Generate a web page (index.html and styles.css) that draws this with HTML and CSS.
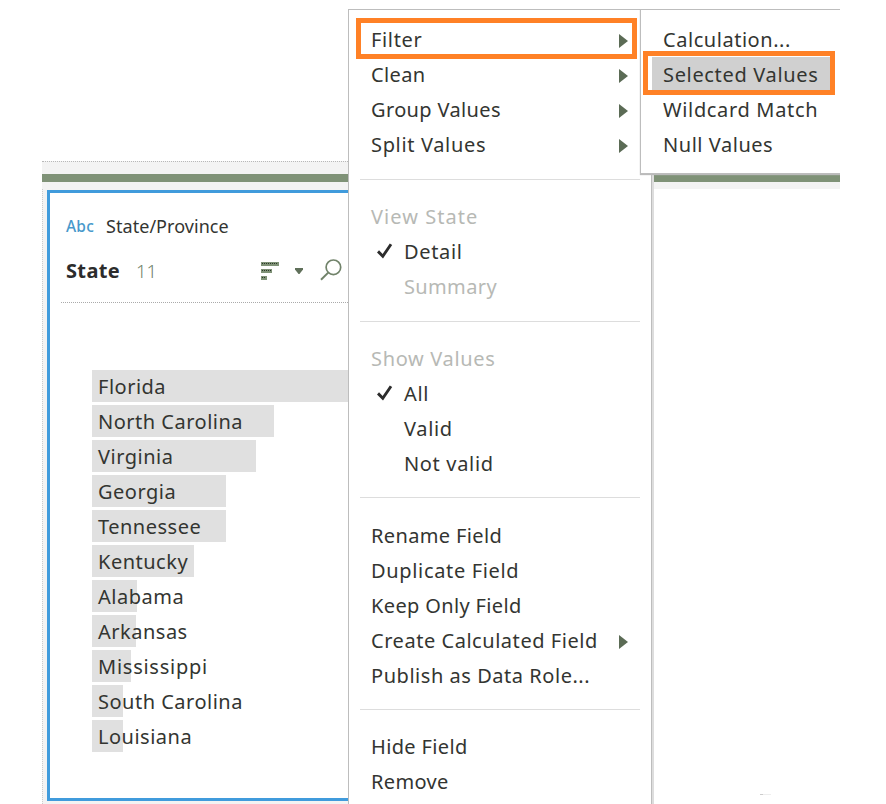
FILE: index.html
```html
<!DOCTYPE html>
<html lang="en">
<head>
<meta charset="utf-8">
<title>State field menu</title>
<link rel="stylesheet" href="styles.css">
</head>
<body>
<div class="app">
  <div class="toolbar-gap"></div>
  <div class="strip"></div>
  <div class="step-bar"></div>
  <div class="strip strip-low"></div>
  <div class="work">
    <section class="card">
      <div class="source"><span class="type">Abc</span><span class="source-name">State/Province</span></div>
      <div class="heading">
        <span class="title">State</span><span class="count">11</span>
        <svg class="sort" width="18" height="18" viewBox="0 0 18 18"><path d="M0 0h18v4H0zM0 7h11v4H0zM0 14h6v4H0z" fill="#7f9277"/><path d="M1 1.5h16M1 8.5h9M1 15.5h4" stroke="#2c3929" stroke-width="1" stroke-dasharray="1 1"/></svg>
        <svg class="caret" width="8" height="6" viewBox="0 0 8 6"><path d="M0 0h8v1.4L4.5 6h-1L0 1.4z" fill="#60705a"/></svg>
        <svg class="search" width="22" height="22" viewBox="0 0 22 22" fill="none" stroke="#71836a"><circle cx="13.4" cy="8.3" r="7.3" stroke-width="1.7"/><path d="M8.2 13.6L1 20.8" stroke-width="2"/></svg>
      </div>
      <ul class="values">
        <li class="w1"><span>Florida</span></li>
        <li class="w2"><span>North Carolina</span></li>
        <li class="w3"><span>Virginia</span></li>
        <li class="w4"><span>Georgia</span></li>
        <li class="w5"><span>Tennessee</span></li>
        <li class="w6"><span>Kentucky</span></li>
        <li class="w7"><span>Alabama</span></li>
        <li class="w8"><span>Arkansas</span></li>
        <li class="w9"><span>Mississippi</span></li>
        <li class="w10"><span>South Carolina</span></li>
        <li class="w10"><span>Louisiana</span></li>
      </ul>
    </section>
    <div class="mark"></div>
  </div>

  <nav class="menu">
    <div class="item wide"><span>Filter</span><i class="arrow"></i></div>
    <div class="item tight"><span>Clean</span><i class="arrow"></i></div>
    <div class="item tight"><span>Group Values</span><i class="arrow"></i></div>
    <div class="item wide"><span>Split Values</span><i class="arrow"></i></div>
    <hr>
    <div class="item wider muted"><span>View State</span></div>
    <div class="item sub wide"><svg class="check" width="16" height="16" viewBox="0 0 16 16"><path d="M1 8.4L5.8 13.2L14 1.2" fill="none" stroke="#2c2c2c" stroke-width="2.9"/></svg><span>Detail</span></div>
    <div class="item sub tight muted"><span>Summary</span></div>
    <hr>
    <div class="item wide muted"><span>Show Values</span></div>
    <div class="item sub wide"><svg class="check" width="16" height="16" viewBox="0 0 16 16"><path d="M1 8.4L5.8 13.2L14 1.2" fill="none" stroke="#2c2c2c" stroke-width="2.9"/></svg><span>All</span></div>
    <div class="item sub wide"><span>Valid</span></div>
    <div class="item sub wide"><span>Not valid</span></div>
    <hr class="early">
    <div class="item tight"><span>Rename Field</span></div>
    <div class="item wide"><span>Duplicate Field</span></div>
    <div class="item tight"><span>Keep Only Field</span></div>
    <div class="item"><span>Create Calculated Field</span><i class="arrow"></i></div>
    <div class="item"><span>Publish as Data Role...</span></div>
    <hr class="last">
    <div class="item tight"><span>Hide Field</span></div>
    <div class="item tight"><span>Remove</span></div>
  </nav>

  <nav class="submenu">
    <div class="item"><span>Calculation...</span></div>
    <div class="item selected wide"><span>Selected Values</span></div>
    <div class="item wide"><span>Wildcard Match</span></div>
    <div class="item"><span>Null Values</span></div>
  </nav>
  <div class="callout callout-filter"></div>
  <div class="callout callout-selected"></div>
</div>
</body>
</html>
```
FILE: styles.css
```css
*, *::before { box-sizing: border-box; }
body { margin: 0; background: #fff; color: #333531; font: 20px/35px "Noto Sans", sans-serif; }
.app { position: relative; width: 798px; height: 804px; margin-left: 42px; overflow: hidden; }
.toolbar-gap { height: 161px; }
.strip { height: 13px; background: #f3f3f3; border-top: 1px dotted #b8b8b8; }
.step-bar { height: 8px; background: #7f9277; }
.strip-low { height: 7px; border: 0; }
.work { display: flex; height: 615px; background: linear-gradient(#f3f3f3, #f3f3f3) 0 100% / 308px 3px no-repeat, linear-gradient(#f3f3f3, #f3f3f3) 0 0 / 308px 1px no-repeat; }
.work::before { content: ""; width: 5px; flex: none; background: #f3f3f3; border-left: 1px dotted #ccc; }
.card { width: 303px; flex: none; height: 611px; margin-top: 1px; border: 3px solid #409bdc; border-right: 0; padding: 17px 0 0 11px; }
.source { display: flex; align-items: center; height: 34px; padding: 0 0 2px 5px; }
.type { width: 40px; color: #4799cb; font-size: 15.5px; font-weight: 500; letter-spacing: .2px; }
.source-name { font-size: 18px; letter-spacing: .05px; }
.heading { display: flex; align-items: center; height: 59px; border-bottom: 1px dotted #aaa; padding: 0 0 5px 5px; }
.title { width: 70px; color: #2c2c2c; font-weight: 700; letter-spacing: .35px; }
.count { width: 125px; color: #71836a; font-size: 18.5px; font-weight: 300; }
.sort { width: 18px; margin-right: 16px; }
.caret { margin-right: 17px; }
.search { margin-top: -2px; }
.values { list-style: none; margin: 67px 0 0 31px; padding: 0; }
.values li { height: 32px; margin-bottom: 3px; padding-left: 6px; background: #e0e0e0; line-height: 33px; white-space: nowrap; letter-spacing: .5px; }
.values .w1 { width: 258px; } .values .w2 { width: 182px; } .values .w3 { width: 164px; }
.values .w4 { width: 134px; } .values .w5 { width: 134px; } .values .w6 { width: 102px; }
.values .w7 { width: 45px; } .values .w8 { width: 44px; } .values .w9 { width: 39px; letter-spacing: .75px; }
.values .w10 { width: 31px; }
.mark { width: 11px; height: 1px; margin: 605px 0 0 410px; background: linear-gradient(90deg, #ccc 3px, #eee 3px); }
.menu { position: absolute; left: 306px; top: 9px; width: 304px; height: 800px; padding: 12px 11px 0; background: #fff; border: 1px solid #bdbdbd; box-shadow: 2px 3px 0 #ddd; }
.item { display: flex; align-items: center; justify-content: space-between; height: 35px; padding: 0 12px 0 11px; white-space: nowrap; letter-spacing: .54px; }
.tight { letter-spacing: .36px; }
.wide { letter-spacing: .66px; }
.wider { letter-spacing: 1.05px; }
.sub { padding-left: 44px; position: relative; }
.muted { color: #b7b9b5; }
.check { position: absolute; left: 17px; top: 9px; }
hr { height: 1px; margin: 17px 0 19px; border: 0; background: #ddd; }
.early { margin: 16px 0 20px; }
.last { margin: 16px 0 19px; }
.arrow { width: 9px; height: 14px; margin-top: 3px; background: #5b6b55; clip-path: polygon(0 0, 100% 50%, 0 100%); }
.submenu { position: absolute; left: 598px; top: 9px; width: 202px; height: 165px; padding: 12px 11px 0; background: #fff; border: 1px solid #bdbdbd; box-shadow: 0 1px 1px #bbb; }
.selected { background: #d0d0d0; }
.callout { position: absolute; border: 5px solid #ff8126; }
.callout-filter { left: 314px; top: 18px; width: 281px; height: 41px; }
.callout-selected { left: 601px; top: 51px; width: 192px; height: 44px; }
```
